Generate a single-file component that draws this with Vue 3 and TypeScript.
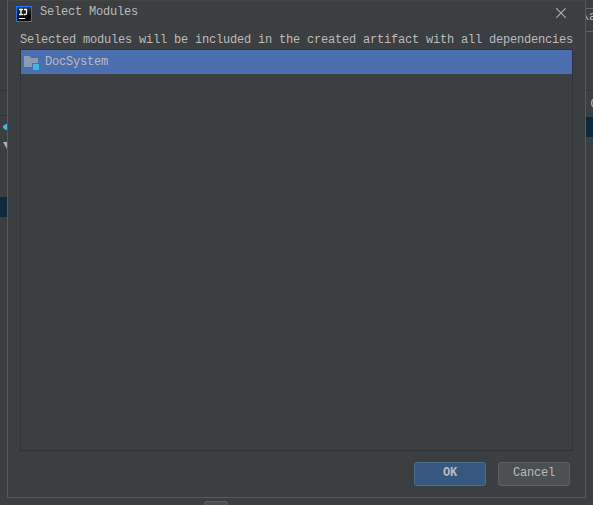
<script setup lang="ts">
import { ref } from 'vue'

const modules = ref<string[]>(['DocSystem'])
const selected = ref<string>('DocSystem')
</script>

<template>
  <div class="desktop">
    <div class="strip left">
      <div class="pane head"></div>
      <div class="pane tools"></div>
      <div class="tree">
        <svg class="module-mark" width="7" height="10" viewBox="0 0 7 10"><path d="M7 2H5.800L3 4v2l2.800 2H7z" fill="#40b6e0" /></svg>
        <svg class="arrow-mark" width="7" height="8" viewBox="0 0 7 8"><path d="M3 1h8L7 8z" fill="#afb1b3" /></svg>
        <div class="row-mark"></div>
      </div>
    </div>
    <div class="strip right">
      <div class="field">\a</div>
      <div class="pane divider"></div>
      <div class="peek"><svg width="2" height="8" viewBox="0 0 2 8"><path d="M2 .5Q.7 1 .7 4T2 7.500" fill="none" stroke="#afb1b3" stroke-width="1.300" /></svg></div>
      <div class="row-mark"></div>
    </div>
    <div class="back-button"></div>

    <section class="dialog">
      <header class="title-bar">
        <svg class="logo" width="16" height="16" viewBox="0 0 16 16">
          <defs>
            <linearGradient id="logo-fill" x1="0" y1="0" x2="0" y2="1">
              <stop offset="0" stop-color="#3c3f41" /><stop offset=".6" stop-color="#000" />
            </linearGradient>
          </defs>
          <rect x=".5" y=".5" width="15" height="15" fill="url(#logo-fill)" stroke="#087cfa" />
          <path d="M3 3.500h4M5 3.500v5M3 8.500h4M8 3.500h3M10.500 3.500v3.700q0 1.300-1.300 1.300H7.500" fill="none" stroke="#fff" stroke-width="1.300" />
          <path d="M3 12.500h6" stroke="#fff" />
        </svg>
        <h1>Select Modules</h1>
        <svg class="close" width="10" height="10" viewBox="0 0 10 10"><path d="M.3.3l9.400 9.400M9.700.3L.3 9.700" stroke="#b0b1b2" stroke-width="1.100" /></svg>
      </header>
      <div class="content">
        <p>Selected modules will be included in the created artifact with all dependencies</p>
        <ul class="list">
          <li v-for="name in modules" :key="name" :class="{ active: name === selected }" @click="selected = name">
            <svg width="16" height="16" viewBox="0 0 16 16">
              <path d="M1 1h5l2 2h7v5H9v4H1z" fill="#8b9bb1" />
              <path d="M10 9h6v6h-6z" fill="#40b6e0" />
            </svg>
            <span>{{ name }}</span>
          </li>
        </ul>
        <footer>
          <button class="primary">OK</button>
          <button>Cancel</button>
        </footer>
      </div>
    </section>
  </div>
</template>

<style>
body { margin: 0; background: #3c3f41; }
</style>

<style scoped>
* { box-sizing: border-box; }
.desktop {
  position: relative; display: flex; justify-content: space-between;
  width: 593px; height: 505px; overflow: hidden; background: #3c3f41; color: #bbb;
  font-family: "Liberation Mono", monospace; font-size: 12px; letter-spacing: -0.2px;
}
.strip { display: flex; flex-direction: column; width: 7px; height: 505px; }
.pane { flex: none; border-bottom: 1px solid #303234; }
.head { height: 91px; }
.tools { height: 25px; }
.tree { display: flex; flex-direction: column; padding-top: 6px; }
.tree svg { display: block; }
.arrow-mark { margin-top: 9px; }
.row-mark { height: 20px; background: #0d293e; }
.left .row-mark { margin-top: 48px; }
.field {
  flex: none; width: 12px; height: 24px; margin-top: 8px; line-height: 17px; overflow: hidden;
  border: 1px solid #646464; border-left: 0; white-space: nowrap; text-indent: -4px;
}
.divider { height: 59px; }
.peek { display: flex; justify-content: flex-end; height: 26px; padding-top: 8px; }
.back-button {
  position: absolute; left: 204px; top: 501px; width: 24px; height: 20px;
  background: #4c5052; border: 1px solid #5e6060; border-radius: 3px;
}
.dialog {
  position: absolute; left: 7px; top: 0; width: 579px; height: 498px;
  display: flex; flex-direction: column; background: #3c3f41;
  border: 1px solid #5b5857; border-top-color: #454441;
}
.title-bar { display: flex; align-items: flex-start; height: 31px; padding: 5px 19px 0 8px; }
.logo { flex: none; }
h1 { flex: 1; margin: -1px 0 0 8px; font-size: inherit; font-weight: 400; line-height: 14px; }
.close { margin-top: 2px; }
.content { display: flex; flex: 1; flex-direction: column; padding: 0 12px 11px; }
p { margin: 0; height: 17px; line-height: 16px; white-space: nowrap; }
.list { height: 402px; margin: 0; padding: 0; border: 1px solid #303234; list-style: none; }
li { display: flex; gap: 6px; height: 24px; padding: 5px 2px; line-height: 14px; }
li svg { flex: none; }
li.active { background: #4b6eaf; }
footer { display: flex; justify-content: flex-end; gap: 12px; margin-top: 11px; padding-right: 3px; }
button {
  width: 72px; height: 24px; padding: 0 0 2px; border: 1px solid #5e6060; border-radius: 3px;
  background: #4c5052; color: #bbb; font: inherit; letter-spacing: inherit; line-height: 20px;
}
.primary { background: #365880; border-color: #4c708c; font-weight: 700; }
</style>
